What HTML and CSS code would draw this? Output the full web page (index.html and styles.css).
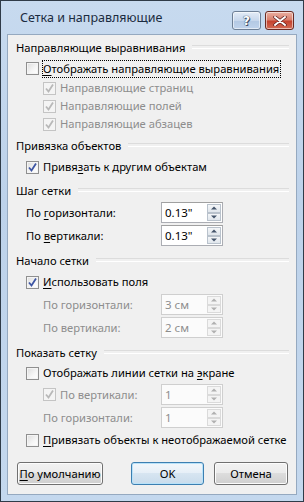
FILE: index.html
```html
<!DOCTYPE html>
<html lang="ru">
<head>
<meta charset="utf-8">
<link rel="stylesheet" href="styles.css">
</head>
<body>
<div class="window">
  <div class="titlebar">
    <span class="title">Сетка и направляющие</span>
    <div class="tbtns">
      <span class="tb help">?</span>
      <span class="tb close"><svg width="14" height="10" viewBox="0 0 14 10"><path d="M2 1 L12 9 M12 1 L2 9" stroke="#5a1e1e" stroke-width="3.4" stroke-linecap="round"/><path d="M2 1 L12 9 M12 1 L2 9" stroke="#fff" stroke-width="2" stroke-linecap="round"/></svg></span>
    </div>
  </div>
  <div class="client">
    <div class="hdr h1"><span>Направляющие выравнивания</span></div>
    <div class="row l1 r-first"><span class="cb"></span><span class="txt focus"><u>О</u>тображать направляющие выравнивания</span></div>
    <div class="row l2 sub dis"><span class="cb on dis"><svg viewBox="0 0 11 11"><path d="M2 5.5 L4.5 8.5 L9 1.5" /></svg></span><span class="txt">Направляющие страниц</span></div>
    <div class="row l2 sub dis"><span class="cb on dis"><svg viewBox="0 0 11 11"><path d="M2 5.5 L4.5 8.5 L9 1.5" /></svg></span><span class="txt">Направляющие полей</span></div>
    <div class="row l2 sub dis"><span class="cb on dis"><svg viewBox="0 0 11 11"><path d="M2 5.5 L4.5 8.5 L9 1.5" /></svg></span><span class="txt">Направляющие абзацев</span></div>

    <div class="hdr"><span>Привязка объектов</span></div>
    <div class="row l1"><span class="cb on"><svg viewBox="0 0 11 11"><path d="M2 5.5 L4.5 8.5 L9 1.5" /></svg></span><span class="txt">Привя<u>з</u>ать к другим объектам</span></div>

    <div class="hdr"><span>Шаг сетки</span></div>
    <div class="row l1 inrow"><span class="lbl">По <u>г</u>оризонтали:</span><span class="spin"><span class="val">0.13"</span><span class="arrows"><span class="ab up"></span><span class="ab dn"></span></span></span></div>
    <div class="row l1 inrow"><span class="lbl">По <u>в</u>ертикали:</span><span class="spin"><span class="val">0.13"</span><span class="arrows"><span class="ab up"></span><span class="ab dn"></span></span></span></div>

    <div class="hdr hx"><span>Начало сетки</span></div>
    <div class="row l1"><span class="cb on"><svg viewBox="0 0 11 11"><path d="M2 5.5 L4.5 8.5 L9 1.5" /></svg></span><span class="txt"><u>И</u>спользовать поля</span></div>
    <div class="row l2 inrow dis"><span class="lbl">По горизонтали:</span><span class="spin dis"><span class="val">3 см</span><span class="arrows"><span class="ab up"></span><span class="ab dn"></span></span></span></div>
    <div class="row l2 inrow dis"><span class="lbl">По вертикали:</span><span class="spin dis"><span class="val">2 см</span><span class="arrows"><span class="ab up"></span><span class="ab dn"></span></span></span></div>

    <div class="hdr hx"><span>Показать сетку</span></div>
    <div class="row l1 r-short"><span class="cb"></span><span class="txt">Отображать линии сетки на <u>э</u>кране</span></div>
    <div class="row l2 inrow dis"><span class="lbl lblcb"><span class="cb on dis"><svg viewBox="0 0 11 11"><path d="M2 5.5 L4.5 8.5 L9 1.5" /></svg></span><span class="txt">По вертикали:</span></span><span class="spin dis"><span class="val">1</span><span class="arrows"><span class="ab up"></span><span class="ab dn"></span></span></span></div>
    <div class="row l2 inrow dis"><span class="lbl">По горизонтали:</span><span class="spin dis"><span class="val">1</span><span class="arrows"><span class="ab up"></span><span class="ab dn"></span></span></span></div>
    <div class="row l1"><span class="cb"></span><span class="txt"><u>П</u>ривязать объекты к неотображаемой сетке</span></div>

    <div class="buttons">
      <span class="btn b-def"><u>П</u>о умолчанию</span>
      <span class="btn b-ok">OK</span>
      <span class="btn b-cancel">Отмена</span>
    </div>
  </div>
</div>
</body>
</html>
```
FILE: styles.css
```css
* { box-sizing: border-box; }
html, body { margin: 0; padding: 0; }
body {
  width: 304px;
  height: 502px;
  font-family: "Noto Sans", "Open Sans", sans-serif;
  font-size: 11.2px;
  color: #000;
  overflow: hidden;
  background: #c3d6ec;
}
.window {
  width: 304px;
  height: 502px;
  border: 1px solid #2f3b48;
  background: linear-gradient(180deg, #c7daef 0%, #bdd2ea 40%, #c4d8ee 100%);
  padding: 0 6px 6px;
  display: flex;
  flex-direction: column;
}
.titlebar {
  height: 33px;
  display: flex;
  align-items: flex-start;
  position: relative;
}
.title {
  margin-left: 13px;
  margin-top: 9px;
  font-size: 12.5px;
  color: #1b2b40;
  line-height: 16px;
}
.tbtns {
  margin-left: auto;
  margin-top: 10px;
  margin-right: 3px;
  display: flex;
  gap: 4px;
}
.tb {
  width: 29px;
  height: 19px;
  border: 1px solid #6d7f96;
  border-radius: 3px;
  display: flex;
  align-items: center;
  justify-content: center;
  box-shadow: inset 0 0 0 1px rgba(255,255,255,0.55);
}
.help {
  background: linear-gradient(180deg, #e3ecf7 0%, #c7d7ec 50%, #b3c8e3 51%, #bfd3ec 100%);
  font-family: "DejaVu Sans", sans-serif;
  font-weight: bold;
  font-size: 12px;
  color: #fff;
  text-shadow: 0 0 1px #40526a, 0 0 1px #40526a, 1px 1px 0 #40526a;
}
.close {
  border-color: #6a2a22;
  background: linear-gradient(180deg, #eab0a2 0%, #d9806e 45%, #c4432f 55%, #d26b55 100%);
}
.close svg { display: block; }
.client {
  flex: 1;
  border: 1px solid #95a9c0;
  background: #f0f0f0;
  display: flex;
  flex-direction: column;
  padding-top: 1px;
}
.hdr {
  height: 22px;
  display: flex;
  align-items: center;
  padding: 0 7px 0 8px;
  margin-top: 1px;
}
.hdr.h1 { margin-top: 0; }
.hdr.hx { margin-top: 3px; }
.hdr::after {
  content: "";
  flex: 1;
  margin-left: 7px;
  height: 2px;
  border-top: 1px solid #dcdcdc;
  border-bottom: 1px solid #fff;
}
.row {
  height: 22px;
  display: flex;
  align-items: center;
  white-space: nowrap;
}
.row.sub { height: 18px; }
.row.r-first { height: 21px; }
.row.r-short { height: 20px; }
.l1 { padding-left: 18px; }
.l2 { padding-left: 35px; }
.dis { color: #8d8d8d; }
.cb {
  width: 13px;
  height: 13px;
  border: 1px solid #8f8f8f;
  background: linear-gradient(135deg, #dcdcdc 0%, #f6f6f6 60%, #ffffff 100%);
  box-shadow: inset 0 0 0 1px #f4f4f4;
  display: inline-flex;
  align-items: center;
  justify-content: center;
  flex: none;
  margin-right: 4px;
}
.cb svg { width: 11px; height: 11px; }
.cb svg path { fill: none; stroke: #3d55a3; stroke-width: 1.8; }
.cb.dis { border-color: #c4c4c4; background: #f4f4f4; box-shadow: none; }
.cb.dis svg path { stroke: #b8b8b8; }
.txt { line-height: 16px; }
.focus { outline: 1px dotted #000; outline-offset: 0; padding: 0 1px 0 0; }
u { text-decoration: underline; text-underline-offset: 2px; }
.inrow { height: 23px; }
.inrow + .hdr { margin-top: 2px; }
.l1 .lbl { width: 135px; }
.l2 .lbl { width: 118px; }
.lblcb { display: flex; align-items: center; }
.spin {
  width: 62px;
  height: 21px;
  border: 1px solid #abadb3;
  border-top-color: #a0a0a0;
  background: #fff;
  display: flex;
  align-items: stretch;
  color: #000;
}
.spin.dis { border-color: #cfcfcf; background: #fbfbfb; color: #8d8d8d; }
.val { flex: 1; padding-left: 3px; line-height: 19px; font-size: 11.5px; }
.arrows {
  width: 15px;
  display: flex;
  flex-direction: column;
  padding: 1px 1px 1px 0;
}
.ab {
  flex: 1;
  border: 1px solid #b9c2cc;
  background: linear-gradient(180deg, #f4f6f8, #e0e6ec);
  position: relative;
}
.spin.dis .ab { border-color: #dadada; background: #f4f4f4; }
.ab::after {
  content: "";
  position: absolute;
  left: 50%;
  top: 50%;
  width: 0; height: 0;
  border-left: 3px solid transparent;
  border-right: 3px solid transparent;
  transform: translate(-50%, -50%);
}
.up::after { border-bottom: 3px solid #44546a; }
.dn::after { border-top: 3px solid #44546a; }
.spin.dis .up::after { border-bottom-color: #b0b0b0; }
.spin.dis .dn::after { border-top-color: #b0b0b0; }
.buttons {
  display: flex;
  padding: 0 8px 0 9px;
  margin-top: 11px;
  gap: 10px;
}
.btn {
  height: 23px;
  border: 1px solid #707070;
  border-radius: 3px;
  background: linear-gradient(180deg, #f2f2f2 0%, #ebebeb 49%, #dddddd 50%, #cfcfcf 100%);
  box-shadow: inset 0 0 0 1px #fcfcfc;
  display: flex;
  align-items: center;
  justify-content: center;
  white-space: nowrap;
}
.b-def { width: 86px; }
.b-ok {
  width: 73px;
  margin-left: auto;
  border-color: #3c7fb1;
  box-shadow: inset 0 0 0 1px #b8e2f9;
  background: linear-gradient(180deg, #f2f7fb 0%, #e6eff7 49%, #d7e5f1 50%, #c9dcec 100%);
}
.b-cancel { width: 74px; }
```
